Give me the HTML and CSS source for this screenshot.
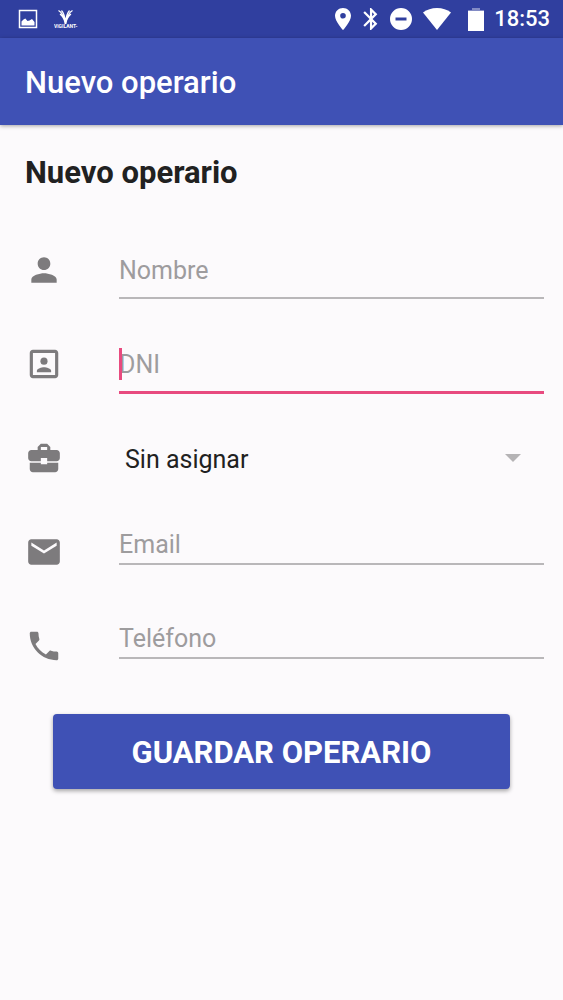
FILE: index.html
```html
<!DOCTYPE html>
<html lang="es">
<head>
<meta charset="utf-8">
<meta name="viewport" content="width=device-width, initial-scale=1">
<title>Nuevo operario</title>
<link rel="stylesheet" href="styles.css">
</head>
<body>
<div class="status-bar">
  <svg class="status-image" viewBox="0 0 20 20" width="20" height="20" aria-hidden="true"><path fill="none" stroke="currentColor" stroke-width="1.5" d="M1.5 1.5h17v17h-17z"/><path fill="currentColor" d="M3.5 16.5v-4l2-2 1.8-1 2.2 2.500 2-.5 2.500-1.500 2.500 3v3.500z"/></svg>
  <svg class="status-brand" viewBox="0 0 24 20" width="24" height="20" aria-hidden="true"><path fill="none" stroke="currentColor" stroke-width="1.200" d="M4.500 1.500Q9.500 4 11.200 15M7.500 1.500Q10.800 5 11.500 14M18.500 1.500Q13.500 4 11.800 15M15.500 1.500Q12.200 5 11.500 14M6 5Q10 8 11.500 15M17 5Q13 8 11.500 15"/><text class="brand-text" x="0" y="19">ViGILANT-</text></svg>
  <span class="spacer"></span>
  <svg class="status-pin" viewBox="0 0 16 22" width="16" height="22" aria-hidden="true"><path fill="currentColor" fill-rule="evenodd" d="M8 0C3.600 0 0 3.400 0 7.700 0 13.500 8 22 8 22s8-8.500 8-14.300C16 3.400 12.400 0 8 0zm0 10.500a2.800 2.800 0 1 1 0-5.600 2.800 2.800 0 0 1 0 5.600z"/></svg>
  <svg class="status-bluetooth" viewBox="5 2 13 20" width="15" height="22" aria-hidden="true"><path fill="currentColor" d="M17.710 7.710L12 2h-1v7.590L6.410 5 5 6.410 10.590 12 5 17.590 6.410 19 11 14.410V22h1l5.710-5.710-4.300-4.290 4.300-4.290zM13 5.830l1.880 1.880L13 9.590V5.830zm1.880 10.460L13 18.170v-3.760l1.880 1.880z"/></svg>
  <svg class="status-dnd" viewBox="0 0 22 22" width="22" height="22" aria-hidden="true"><path fill="currentColor" fill-rule="evenodd" d="M11 0a11 11 0 1 0 0 22 11 11 0 0 0 0-22zM5.500 9.500h11v3h-11z"/></svg>
  <svg class="status-wifi" viewBox="0 0 28 22" width="28" height="22" aria-hidden="true"><path fill="currentColor" d="M14 22L0 4.500C4 1.500 8.500 0 14 0s10 1.500 14 4.500z"/></svg>
  <svg class="status-battery" viewBox="0 0 16 23" width="16" height="23" aria-hidden="true"><path fill="currentColor" opacity=".4" d="M4 0h8v2h4v2H0V2h4z"/><path fill="currentColor" d="M0 3h16v20H0z"/></svg>
  <time class="clock">18:53</time>
</div>
<header class="app-bar">Nuevo operario</header>
<main class="content">
  <h1 class="heading">Nuevo operario</h1>
  <form class="form">
    <div class="row">
      <label class="icon-label" for="nombre" aria-label="Nombre"><svg class="icon" viewBox="0 0 24 24" aria-hidden="true"><path fill="currentColor" d="M12 12c2.210 0 4-1.790 4-4s-1.790-4-4-4-4 1.790-4 4 1.790 4 4 4zm0 2c-2.670 0-8 1.340-8 4v2h16v-2c0-2.660-5.330-4-8-4z"/></svg></label>
      <div class="field"><input class="input" id="nombre" type="text" placeholder="Nombre"></div>
    </div>
    <div class="row">
      <label class="icon-label" for="dni" aria-label="DNI"><svg class="icon" viewBox="0 0 24 24" aria-hidden="true"><path fill="currentColor" d="M19 3H5c-1.110 0-2 .9-2 2v14c0 1.100.89 2 2 2h14c1.100 0 2-.9 2-2V5c0-1.100-.9-2-2-2zm0 16H5V5h14v14z"/><circle fill="currentColor" cx="12" cy="10.200" r="2.250"/><path fill="currentColor" d="M16.500 17.200v-.9c0-1.500-3-2.300-4.500-2.300s-4.500.8-4.500 2.300v.9z"/></svg></label>
      <div class="field"><input class="input input-active" id="dni" type="text" placeholder="DNI"><span class="caret"></span></div>
    </div>
    <div class="row">
      <label class="icon-label" for="asignar" aria-label="Asignar"><svg class="icon" viewBox="0 0 24 24" aria-hidden="true"><path fill="currentColor" d="M10 16v-1H3.010L3 19c0 1.110.89 2 2 2h14c1.110 0 2-.89 2-2v-4h-7v1h-4zm10-9h-4.010V5l-2-2h-4l-2 2v2H4c-1.100 0-2 .9-2 2v3c0 1.110.89 2 2 2h6v-2h4v2h6c1.100 0 2-.9 2-2V9c0-1.100-.9-2-2-2zm-6 0h-4V5h4v2z"/></svg></label>
      <div class="field">
        <select class="select" id="asignar"><option>Sin asignar</option></select>
        <svg class="arrow" viewBox="0 0 16 8" width="16" height="8" aria-hidden="true"><path fill="currentColor" d="M0 0h16L8 8z"/></svg>
      </div>
    </div>
    <div class="row row-compact">
      <label class="icon-label" for="email" aria-label="Email"><svg class="icon" viewBox="0 0 24 24" aria-hidden="true"><path fill="currentColor" d="M20 4H4c-1.100 0-1.990.9-1.990 2L2 18c0 1.100.9 2 2 2h16c1.100 0 2-.9 2-2V6c0-1.100-.9-2-2-2zm0 4l-8 5-8-5V6l8 5 8-5v2z"/></svg></label>
      <div class="field"><input class="input" id="email" type="email" placeholder="Email"></div>
    </div>
    <div class="row row-compact">
      <label class="icon-label" for="telefono" aria-label="Teléfono"><svg class="icon" viewBox="0 0 24 24" aria-hidden="true"><path fill="currentColor" d="M6.620 10.790c1.440 2.830 3.760 5.140 6.590 6.590l2.200-2.200c.27-.27.67-.36 1.020-.24 1.120.37 2.330.57 3.570.57.55 0 1 .45 1 1V20c0 .55-.45 1-1 1-9.390 0-17-7.610-17-17 0-.55.45-1 1-1h3.500c.55 0 1 .45 1 1 0 1.250.2 2.450.57 3.570.11.35.03.74-.25 1.020l-2.200 2.200z"/></svg></label>
      <div class="field"><input class="input" id="telefono" type="tel" placeholder="Teléfono"></div>
    </div>
    <button class="save" type="button">GUARDAR OPERARIO</button>
  </form>
</main>
</body>
</html>
```
FILE: styles.css
```css
* {
  box-sizing: border-box;
}

body {
  margin: 0;
  min-height: 100vh;
  background: #fcfafc;
  color: #212121;
  font-family: Roboto, "Liberation Sans", sans-serif;
}

.status-bar {
  display: flex;
  align-items: center;
  height: 38px;
  padding: 0 13px 0 18px;
  background: #303f9f;
  color: #fff;
}

.status-bar svg {
  flex: none;
}

.status-brand {
  margin-left: 16px;
}

.brand-text {
  fill: currentColor;
  font-size: 5px;
  font-weight: 700;
}

.spacer {
  flex: 1;
}

.status-bluetooth {
  margin-left: 12px;
}

.status-dnd {
  margin-left: 12px;
}

.status-wifi {
  margin-left: 11px;
}

.status-battery {
  margin-left: 17px;
}

.clock {
  margin-left: 10px;
  font-size: 22px;
  font-weight: 500;
  line-height: 38px;
}

.app-bar {
  position: relative;
  height: 87px;
  padding: 0 25px;
  background: #3f51b5;
  box-shadow: 0 1px 4px rgba(0, 0, 0, 0.35);
  color: #fff;
  font-size: 31px;
  font-weight: 500;
  line-height: 90px;
}

.content {
  padding: 29px 19px 24px 25px;
}

.heading {
  margin: 0 0 32px;
  font-size: 31px;
  font-weight: 700;
  line-height: 38px;
}

.form {
  display: flex;
  flex-direction: column;
}

.row {
  display: flex;
  align-items: center;
  gap: 56px;
  height: 94px;
  padding-bottom: 2px;
}

.icon-label {
  flex: none;
  color: #7d7b7d;
}

.icon {
  display: block;
  width: 38px;
  height: 38px;
}

.field {
  position: relative;
  flex: 1;
  align-self: flex-start;
  padding-top: 19px;
}

.input {
  display: block;
  width: 100%;
  height: 56px;
  padding: 0;
  border: 0;
  border-bottom: 2px solid #b9b7b9;
  border-radius: 0;
  outline: 0;
  background: none;
  color: #212121;
  font-family: inherit;
  font-size: 25px;
}

.row-compact .input {
  height: 40px;
}

.input::placeholder {
  color: #9e9c9e;
  opacity: 1;
}

.input-active {
  border-color: #e84a7f;
  box-shadow: 0 1px 0 #e84a7f;
}

.caret {
  position: absolute;
  top: 30px;
  left: 0;
  width: 3px;
  height: 32px;
  background: #e84a7f;
}

.select {
  display: block;
  width: 100%;
  height: 56px;
  padding: 0 40px 0 6px;
  border: 0;
  outline: 0;
  background: none;
  appearance: none;
  color: #212121;
  font-family: inherit;
  font-size: 25px;
}

.arrow {
  position: absolute;
  right: 23px;
  bottom: 25px;
  color: #b5b3b5;
  pointer-events: none;
}

.save {
  height: 75px;
  margin: 20px 34px 0 28px;
  padding: 2px 0 0;
  border: 0;
  border-radius: 4px;
  background: #3f51b5;
  box-shadow: 0 2px 4px rgba(0, 0, 0, 0.35);
  color: #fff;
  font-family: inherit;
  font-size: 31px;
  font-weight: 700;
}
```
